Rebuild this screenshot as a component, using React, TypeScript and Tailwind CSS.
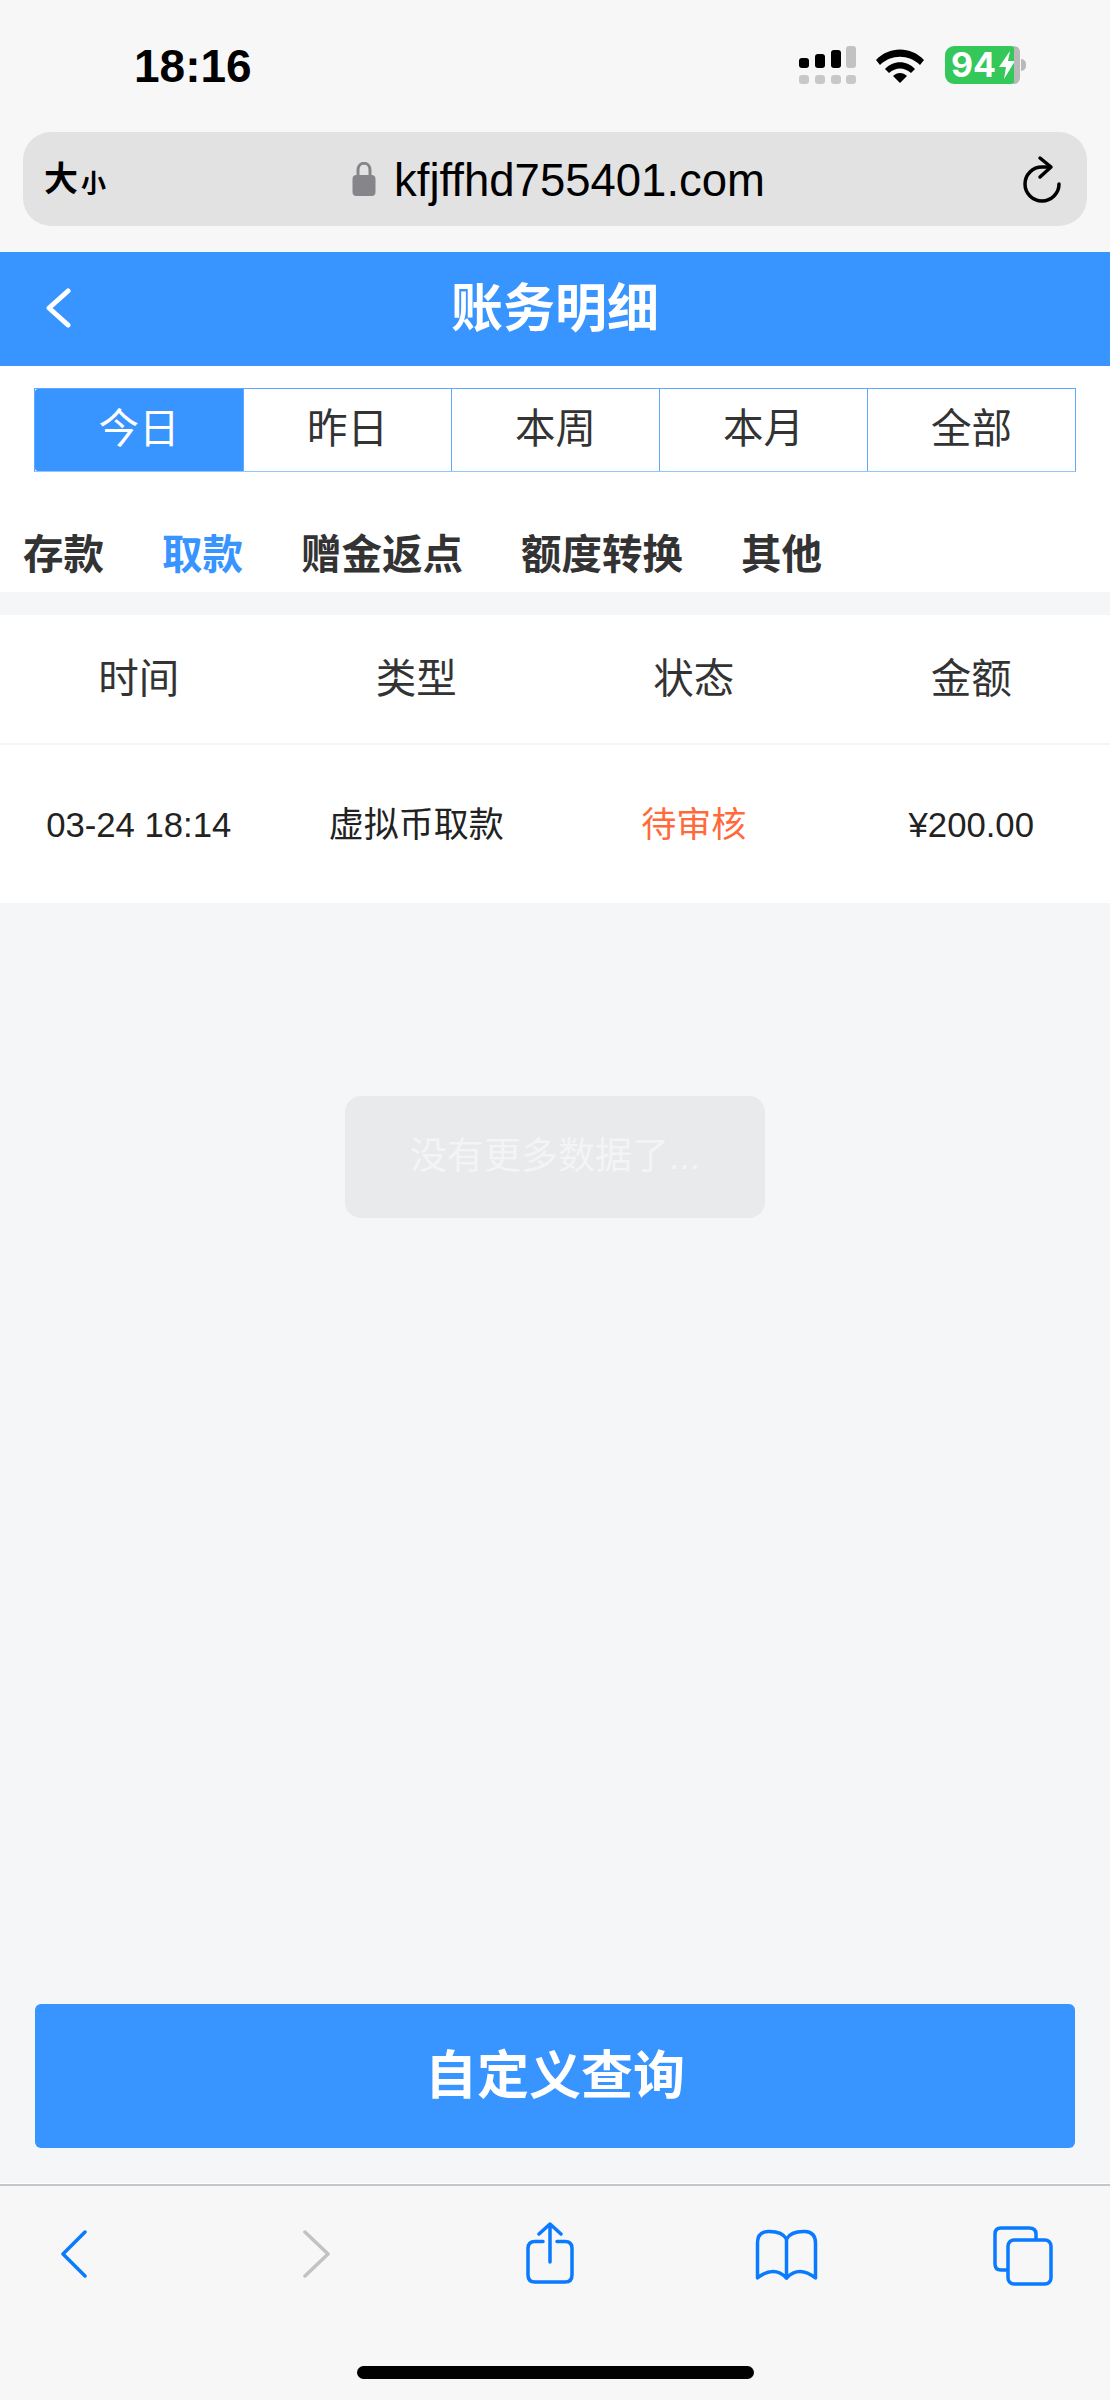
const cjk = { fontFamily: '"Liberation Sans", "Noto Sans CJK SC", sans-serif' };

const ranges = ["今日", "昨日", "本周", "本月", "全部"];
const tabs = ["存款", "取款", "赠金返点", "额度转换", "其他"];
const headers = ["时间", "类型", "状态", "金额"];

function StatusIcons() {
  return (
    <div className="mt-[1px] flex items-center">
      <svg width="58" height="38" viewBox="0 0 58 38" className="mr-[18px]">
        <rect x="0" y="12" width="10" height="10" rx="3" fill="#000" />
        <rect x="16" y="8" width="10" height="14" rx="3" fill="#000" />
        <rect x="32" y="4" width="10" height="18" rx="3" fill="#000" />
        <rect x="47" y="0" width="10" height="22" rx="3" fill="#c2c2c2" />
        <rect x="0" y="29" width="10" height="9" rx="3" fill="#c8c8c8" />
        <rect x="16" y="29" width="10" height="9" rx="3" fill="#c8c8c8" />
        <rect x="32" y="29" width="10" height="9" rx="3" fill="#c8c8c8" />
        <rect x="47" y="29" width="10" height="9" rx="3" fill="#c8c8c8" />
      </svg>
      <svg width="50" height="36" viewBox="0 0 50 36" className="mr-[20px]">
        <path d="M1 13 C14 -1 36 -1 49 13 L45 18 C34 7 16 7 5 18 Z" fill="#000" />
        <path d="M10 22 C18 13 32 13 40 22 L36 26 C29 20 21 20 14 26 Z" fill="#000" />
        <path d="M18 29 C22 25 28 25 32 29 L25 36 Z" fill="#000" />
      </svg>
      <div className="relative flex h-[38px] w-[75px] items-center rounded-[9px] bg-[#34c759] pl-[6px]">
        <span className="text-[34px] leading-none font-bold text-white" style={{ fontFamily: '"Inter", sans-serif' }}>
          94
        </span>
        <svg width="16" height="28" viewBox="0 0 16 28" className="ml-[3px]">
          <path d="M11 0 L0 16 H7 L5 28 L16 10 H9 Z" fill="#fff" />
        </svg>
        <div className="absolute top-0 right-0 bottom-0 w-[6px] rounded-r-[9px] bg-[#b9b9b9]" />
      </div>
      <div className="ml-[1px] h-[12px] w-[5px] rounded-r-full bg-[#b9b9b9]" />
    </div>
  );
}

function UrlBar() {
  return (
    <div className="relative mx-[23px] flex h-[94px] items-center rounded-[28px] bg-[#e2e2e2]">
      <div className="ml-[21px] flex items-end font-bold text-black" style={cjk}>
        <span className="text-[34px] leading-none">大</span>
        <span className="ml-[3px] text-[25px] leading-none">小</span>
      </div>
      <div className="absolute top-[26px] left-[329px] flex items-start">
        <svg width="24" height="34" viewBox="0 0 24 34" className="mt-[4px] mr-[18px]">
          <path d="M6 15 V8 C6 -1 18 -1 18 8 V15" fill="none" stroke="#85858a" strokeWidth="3" />
          <rect x="0.5" y="13" width="23" height="21" rx="4" fill="#85858a" />
        </svg>
        <span className="text-[45.5px] leading-none text-black" style={{ fontFamily: '"Liberation Sans", sans-serif' }}>
          kfjffhd755401.com
        </span>
      </div>
      <svg width="40" height="48" viewBox="0 0 40 48" className="mr-[25px] ml-auto" fill="none" stroke="#000" strokeWidth="3.5" strokeLinecap="round" strokeLinejoin="round">
        <path d="M37 29 A17 17 0 1 1 20 12 H28" />
        <path d="M18 3 L29 12 L18 22" />
      </svg>
    </div>
  );
}

function Toolbar() {
  return (
    <div className="relative h-[216px] border-t-2 border-[#c6c6c6] bg-[#f7f7f7]">
      <div className="flex items-start pt-[36px] pl-[60px]">
        <svg width="28" height="48" viewBox="0 0 28 48" className="mt-[8px]" fill="none" stroke="#0a7aff" strokeWidth="3.5" strokeLinecap="round" strokeLinejoin="round">
          <path d="M25 2 L3 24 L25 46" />
        </svg>
        <svg width="30" height="48" viewBox="0 0 30 48" className="mt-[8px] ml-[214px]" fill="none" stroke="#c2c2c2" strokeWidth="3.5" strokeLinecap="round" strokeLinejoin="round">
          <path d="M3 2 L26 24 L3 46" />
        </svg>
        <svg width="48" height="62" viewBox="0 0 48 62" className="ml-[194px]" fill="none" stroke="#0a7aff" strokeWidth="3.5" strokeLinecap="round" strokeLinejoin="round">
          <path d="M17 19.5 H9 Q2 19.5 2 26.5 V53 Q2 60 9 60 H39 Q46 60 46 53 V26.5 Q46 19.5 39 19.5 H31" />
          <path d="M24 40 V2 M13 12 L24 2 L35 12" />
        </svg>
        <svg width="63" height="52" viewBox="0 0 63 52" className="mt-[7px] ml-[181px]" fill="none" stroke="#0a7aff" strokeWidth="3.5" strokeLinecap="round" strokeLinejoin="round">
          <path d="M2.5 49 V14 Q2.5 3 13 2.5 Q27 2 31.5 10 Q36 2 50 2.5 Q60.5 3 60.5 14 V49 Q44 36 31.5 49 Q19 36 2.5 49 Z" />
          <path d="M31.5 10 V49" />
        </svg>
        <svg width="60" height="60" viewBox="0 0 60 60" className="mt-[4px] ml-[175px]" fill="none" stroke="#0a7aff" strokeWidth="3.5" strokeLinejoin="round">
          <path d="M15 44 H8 Q2 44 2 38 V8 Q2 2 8 2 H36 Q43 2 43 8 V14" />
          <rect x="15" y="14" width="43" height="44" rx="6" />
        </svg>
      </div>
      <div className="absolute bottom-[21px] left-[357px] h-[13px] w-[397px] rounded-full bg-black" />
    </div>
  );
}

export default function App() {
  return (
    <div className="flex h-[2400px] w-[1110px] flex-col overflow-hidden bg-[#f5f6f8]" style={cjk}>
      {/* safari chrome */}
      <div className="h-[252px] bg-[#f7f7f7]">
        <div className="flex h-[132px] items-start justify-between pt-[45px] pr-[84px] pl-[134px]">
          <span className="text-[46px] leading-[42px] font-bold text-black">18:16</span>
          <StatusIcons />
        </div>
        <UrlBar />
      </div>

      {/* header */}
      <div className="relative flex h-[114px] items-center justify-center bg-[#3894ff]">
        <svg width="26" height="40" viewBox="0 0 26 40" className="absolute top-[36px] left-[45px]" fill="none" stroke="#fff" strokeWidth="5" strokeLinecap="round" strokeLinejoin="round">
          <path d="M23 3 L4 20 L23 37" />
        </svg>
        <span className="text-[52px] leading-none font-bold text-white">账务明细</span>
      </div>

      {/* range segments + tabs */}
      <div className="bg-white pt-[22px]">
        <div className="mx-[34px] grid h-[84px] grid-cols-5 border border-[#5fa8ff] border-b-[#93c5ff]">
          {ranges.map((r, i) => (
            <div
              key={r}
              className={
                i === 0
                  ? "flex items-center justify-center rounded-l-[3px] bg-[#3894ff] pb-[2px] text-[40.5px] text-white"
                  : "flex items-center justify-center border-l border-[#5fa8ff] pb-[2px] text-[40.5px] text-[#333]"
              }
            >
              {r}
            </div>
          ))}
        </div>
        <div className="flex h-[120px] items-center gap-[58px] px-[23px] pt-[46px]">
          {tabs.map((t, i) => (
            <span
              key={t}
              className={i === 1 ? "text-[40.5px] leading-none font-bold text-[#3894ff]" : "text-[40.5px] leading-none font-bold text-[#333]"}
            >
              {t}
            </span>
          ))}
        </div>
      </div>

      {/* list */}
      <div className="mt-[23px] bg-white">
        <div className="grid h-[130px] grid-cols-4 items-center border-b-2 border-[#f5f5f5] text-center text-[40.5px] text-[#333]">
          {headers.map((h) => (
            <span key={h}>{h}</span>
          ))}
        </div>
        <div className="grid h-[158px] grid-cols-4 items-center pt-[2px] text-center text-[35px] text-[#222]">
          <span className="text-[34.7px]">03-24 18:14</span>
          <span>虚拟币取款</span>
          <span className="text-[#ff6a3c]">待审核</span>
          <span className="text-[34.7px]">¥200.00</span>
        </div>
      </div>

      <div className="mx-auto mt-[193px] flex h-[122px] w-[420px] items-center justify-center rounded-[16px] bg-[#e9eaec] text-[37px] text-[#f3f4f5]">
        没有更多数据了...
      </div>

      <div className="flex-1" />

      <div className="mx-[35px] mb-[35px] flex h-[144px] items-center justify-center rounded-[6px] bg-[#3894ff] text-[52px] font-bold text-white">
        自定义查询
      </div>
      <div className="h-[1px] bg-white" />
      <Toolbar />
    </div>
  );
}
